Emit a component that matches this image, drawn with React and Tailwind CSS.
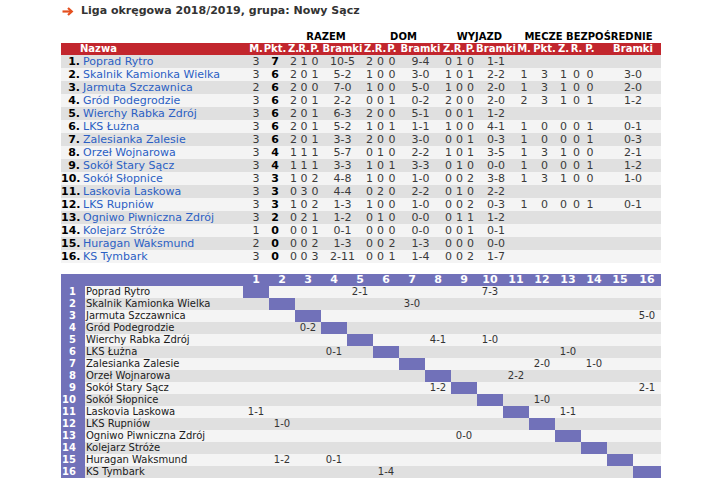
import React from "react";

const topCols =
  "grid grid-cols-[21px_168px_12px_26px_11px_10px_12px_43px_11px_11px_12px_45px_11px_11px_11px_40px_16px_25px_13px_13px_14px_64px]";
const crossCols =
  "grid grid-cols-[24px_158px_26px_26px_26px_26px_26px_26px_26px_26px_26px_26px_26px_26px_26px_26px_26px_28px]";

// [name, M, Pkt, razem Z R P, bramki, dom Z R P, bramki, wyjazd Z R P, bramki, mecze bezp. or null]
const standings = [
  ["Poprad Rytro", 3, 7, [2, 1, 0], "10-5", [2, 0, 0], "9-4", [0, 1, 0], "1-1", null],
  ["Skalnik Kamionka Wielka", 3, 6, [2, 0, 1], "5-2", [1, 0, 0], "3-0", [1, 0, 1], "2-2", [1, 3, 1, 0, 0, "3-0"]],
  ["Jarmuta Szczawnica", 2, 6, [2, 0, 0], "7-0", [1, 0, 0], "5-0", [1, 0, 0], "2-0", [1, 3, 1, 0, 0, "2-0"]],
  ["Gród Podegrodzie", 3, 6, [2, 0, 1], "2-2", [0, 0, 1], "0-2", [2, 0, 0], "2-0", [2, 3, 1, 0, 1, "1-2"]],
  ["Wierchy Rabka Zdrój", 3, 6, [2, 0, 1], "6-3", [2, 0, 0], "5-1", [0, 0, 1], "1-2", null],
  ["LKS Łużna", 3, 6, [2, 0, 1], "5-2", [1, 0, 1], "1-1", [1, 0, 0], "4-1", [1, 0, 0, 0, 1, "0-1"]],
  ["Zalesianka Zalesie", 3, 6, [2, 0, 1], "3-3", [2, 0, 0], "3-0", [0, 0, 1], "0-3", [1, 0, 0, 0, 1, "0-3"]],
  ["Orzeł Wojnarowa", 3, 4, [1, 1, 1], "5-7", [0, 1, 0], "2-2", [1, 0, 1], "3-5", [1, 3, 1, 0, 0, "2-1"]],
  ["Sokół Stary Sącz", 3, 4, [1, 1, 1], "3-3", [1, 0, 1], "3-3", [0, 1, 0], "0-0", [1, 0, 0, 0, 1, "1-2"]],
  ["Sokół Słopnice", 3, 3, [1, 0, 2], "4-8", [1, 0, 0], "1-0", [0, 0, 2], "3-8", [1, 3, 1, 0, 0, "1-0"]],
  ["Laskovia Laskowa", 3, 3, [0, 3, 0], "4-4", [0, 2, 0], "2-2", [0, 1, 0], "2-2", null],
  ["LKS Rupniów", 3, 3, [1, 0, 2], "1-3", [1, 0, 0], "1-0", [0, 0, 2], "0-3", [1, 0, 0, 0, 1, "0-1"]],
  ["Ogniwo Piwniczna Zdrój", 3, 2, [0, 2, 1], "1-2", [0, 1, 0], "0-0", [0, 1, 1], "1-2", null],
  ["Kolejarz Stróże", 1, 0, [0, 0, 1], "0-1", [0, 0, 0], "0-0", [0, 0, 1], "0-1", null],
  ["Huragan Waksmund", 2, 0, [0, 0, 2], "1-3", [0, 0, 2], "1-3", [0, 0, 0], "0-0", null],
  ["KS Tymbark", 3, 0, [0, 0, 3], "2-11", [0, 0, 1], "1-4", [0, 0, 2], "1-7", null],
];

// results: row team -> { column team: score }
const results = {
  1: { 5: "2-1", 10: "7-3" },
  2: { 7: "3-0" },
  3: { 16: "5-0" },
  4: { 3: "0-2" },
  5: { 8: "4-1", 10: "1-0" },
  6: { 4: "0-1", 13: "1-0" },
  7: { 12: "2-0", 14: "1-0" },
  8: { 11: "2-2" },
  9: { 8: "1-2", 16: "2-1" },
  10: { 12: "1-0" },
  11: { 1: "1-1", 13: "1-1" },
  12: { 2: "1-0" },
  13: { 9: "0-0" },
  14: {},
  15: { 2: "1-2", 4: "0-1" },
  16: { 6: "1-4" },
};

const headers = ["M.", "Pkt.", "Z.", "R.", "P.", "Bramki", "Z.", "R.", "P.", "Bramki", "Z.", "R.", "P.", "Bramki", "M.", "Pkt.", "Z.", "R.", "P."];

function C({ children, bold, className = "" }) {
  return (
    <span
      className={`flex justify-center whitespace-nowrap ${bold ? "font-bold text-black" : "text-[#3a3a3a]"} ${className}`}
    >
      {children}
    </span>
  );
}

function ArrowIcon() {
  return (
    <svg width="12" height="9" viewBox="0 0 12 9" className="shrink-0">
      <path d="M0.5 4.5H9.5" stroke="#e5501f" strokeWidth="2.2" />
      <path d="M6 1L9.8 4.5L6 8" stroke="#e5501f" strokeWidth="2.2" fill="none" />
    </svg>
  );
}

function StandingsRow({ row, idx }) {
  const [name, m, pkt, rz, rb, dz, db, wz, wb, mb] = row;
  return (
    <div
      className={`${topCols} h-[13px] items-center leading-[13px] ${idx % 2 === 0 ? "bg-[#e0e0e0]" : "bg-[#f4f4f4]"}`}
    >
      <span className="text-right pr-[2px] font-bold text-black">{idx + 1}.</span>
      <span className="pl-[1px] text-[#2b5fc4] whitespace-nowrap">{name}</span>
      <C>{m}</C>
      <C bold>{pkt}</C>
      {rz.map((v, i) => (
        <C key={"r" + i}>{v}</C>
      ))}
      <C>{rb}</C>
      {dz.map((v, i) => (
        <C key={"d" + i}>{v}</C>
      ))}
      <C>{db}</C>
      {wz.map((v, i) => (
        <C key={"w" + i}>{v}</C>
      ))}
      <C>{wb}</C>
      {mb ? (
        <>
          <C>{mb[0]}</C>
          <C>{mb[1]}</C>
          <C>{mb[2]}</C>
          <C>{mb[3]}</C>
          <C>{mb[4]}</C>
          <C className="pl-[8px]">{mb[5]}</C>
        </>
      ) : null}
    </div>
  );
}

export default function App() {
  const cols = Array.from({ length: 16 }, (_, i) => i + 1);
  return (
    <div className="w-[718px] h-[485px] bg-white font-['DejaVu_Sans',sans-serif] text-[11px] overflow-hidden">
      <div className="ml-[61px] w-[600px] pt-[3px]">
        <div className="flex items-center gap-[7px] h-[16px] pl-[1px]">
          <ArrowIcon />
          <h1 className="text-[11px] font-bold text-[#333]">
            Liga okręgowa 2018/2019, grupa: Nowy Sącz
          </h1>
        </div>

        <div className="mt-[11px]">
          <div className={`${topCols} h-[13px] items-center font-bold text-black text-[10px] leading-[13px]`}>
            <span className="col-start-5 col-span-4 flex justify-center">RAZEM</span>
            <span className="col-start-9 col-span-4 flex justify-center">DOM</span>
            <span className="col-start-13 col-span-4 flex justify-center">WYJAZD</span>
            <span className="col-start-17 col-span-6 flex justify-center whitespace-nowrap">
              MECZE BEZPOŚREDNIE
            </span>
          </div>
          <div className={`${topCols} h-[12px] items-center bg-[#c2262d] text-white font-bold text-[10px] leading-[12px]`}>
            <span className="col-span-2 pl-[19px]">Nazwa</span>
            {headers.map((h, i) => (
              <span key={i} className="flex justify-center whitespace-nowrap">
                {h}
              </span>
            ))}
            <span className="flex justify-center pl-[8px]">Bramki</span>
          </div>
          {standings.map((row, idx) => (
            <StandingsRow key={idx} row={row} idx={idx} />
          ))}
        </div>

        <div className="mt-[11px] text-[10px]">
          <div className={`${crossCols} h-[12px] items-center bg-[#7171b9] text-white font-bold text-[11px] leading-[12px]`}>
            <span></span>
            <span></span>
            {cols.map((c) => (
              <span key={c} className="flex justify-center">
                {c}
              </span>
            ))}
          </div>
          {standings.map((row, idx) => {
            const n = idx + 1;
            return (
              <div
                key={n}
                className={`${crossCols} h-[12px] items-stretch leading-[12px] ${idx % 2 === 0 ? "bg-[#f4f4f4]" : "bg-[#e0e0e0]"}`}
              >
                <span className="bg-[#7171b9] text-white font-bold text-right pr-[9px]">{n}</span>
                <span className="pl-[1px] text-[#1a1a1a] whitespace-nowrap">{row[0]}</span>
                {cols.map((c) =>
                  c === n ? (
                    <span key={c} className="bg-[#7171b9]"></span>
                  ) : (
                    <span key={c} className="flex justify-center text-[#333] whitespace-nowrap">
                      {results[n][c] || ""}
                    </span>
                  )
                )}
              </div>
            );
          })}
        </div>
      </div>
    </div>
  );
}
